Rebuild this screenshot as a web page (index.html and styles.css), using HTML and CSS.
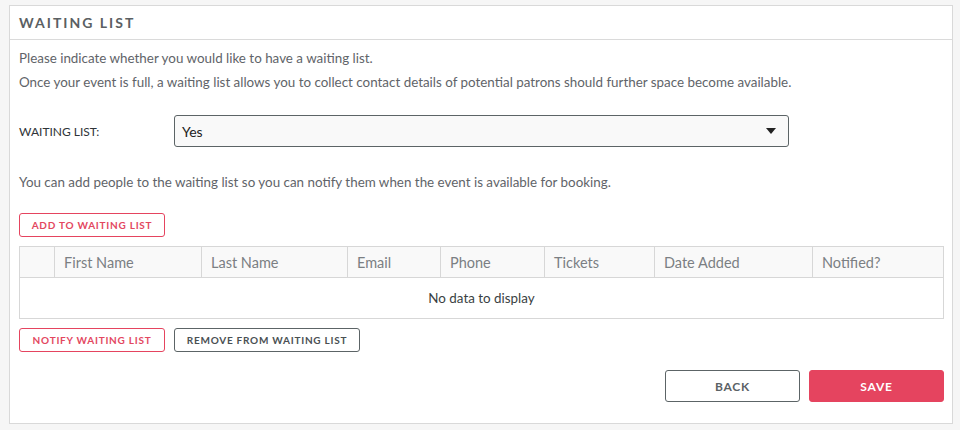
FILE: index.html
```html
<!DOCTYPE html>
<html>
<head>
<meta charset="utf-8">
<link rel="stylesheet" href="styles.css">
</head>
<body>
<div class="panel">
  <div class="panel-head">WAITING LIST</div>
  <div class="panel-body">
    <p class="intro">Please indicate whether you would like to have a waiting list.</p>
    <p class="intro">Once your event is full, a waiting list allows you to collect contact details of potential patrons should further space become available.</p>
    <div class="field">
      <label class="field-label">WAITING LIST:</label>
      <div class="select">
        <span>Yes</span>
        <svg class="caret" width="10" height="6" viewBox="0 0 10 6"><path d="M0 0H10L5 6Z" fill="#222"/></svg>
      </div>
    </div>
    <p class="note">You can add people to the waiting list so you can notify them when the event is available for booking.</p>
    <button class="btn btn-pink">ADD TO WAITING LIST</button>
    <table class="grid">
      <colgroup>
        <col style="width:35px"><col style="width:147px"><col style="width:146px"><col style="width:93px"><col style="width:104px"><col style="width:110px"><col style="width:158px"><col>
      </colgroup>
      <thead>
        <tr><th></th><th>First Name</th><th>Last Name</th><th>Email</th><th>Phone</th><th>Tickets</th><th>Date Added</th><th>Notified?</th></tr>
      </thead>
      <tbody>
        <tr><td colspan="8" class="empty">No data to display</td></tr>
      </tbody>
    </table>
    <div class="actions">
      <button class="btn btn-pink">NOTIFY WAITING LIST</button>
      <button class="btn btn-grey">REMOVE FROM WAITING LIST</button>
    </div>
    <div class="footer">
      <button class="big big-outline">BACK</button>
      <button class="big big-fill">SAVE</button>
    </div>
  </div>
</div>
</body>
</html>
```
FILE: styles.css
```css
* { box-sizing: border-box; }
html, body { margin: 0; padding: 0; }
body {
  background: #f6f6f6;
  font-family: Lato, "Open Sans", sans-serif;
  color: #5f6469;
  padding: 5px 7px 6px 9px;
}
.panel {
  background: #fff;
  border: 1px solid #d9d9d9;
  height: 419px;
}
.panel-head {
  height: 34px;
  border-bottom: 1px solid #dadada;
  padding: 0 9px;
  display: flex;
  align-items: center;
  font-weight: 700;
  font-size: 14px;
  letter-spacing: 2px;
  color: #5b5f63;
}
.panel-body {
  padding: 6px 8px 0 9px;
}
.intro {
  margin: 0;
  font-size: 13.4px;
  line-height: 24px;
}
.field {
  display: flex;
  align-items: center;
  margin-top: 21px;
}
.field-label {
  width: 155px;
  font-size: 12px;
  color: #2f3438;
}
.select {
  width: 615px;
  height: 32px;
  border: 1px solid #5c6466;
  border-radius: 3px;
  background: #f9f9f9;
  display: flex;
  align-items: center;
  justify-content: space-between;
  padding: 0 12px 0 7px;
  font-size: 14px;
  color: #222;
}
.caret { display: block; }
.note {
  margin: 26px 0 0;
  font-size: 13.4px;
  line-height: 18px;
}
.btn {
  font-family: inherit;
  font-size: 10px;
  font-weight: 700;
  letter-spacing: 0.75px;
  white-space: nowrap;
  height: 24px;
  padding: 0;
  background: #fff;
  border-radius: 3px;
  cursor: pointer;
}
.btn-pink { border: 1px solid #e5445f; color: #e3475f; }
.btn-grey { border: 1px solid #5c6466; color: #4a5053; }
.panel-body > .btn-pink { margin-top: 22px; display: block; width: 146px; }
.grid {
  margin-top: 9px;
  width: 925px;
  border-collapse: collapse;
  table-layout: fixed;
  font-size: 14.5px;
}
.grid th {
  background: #f9f9f9;
  border: 1px solid #d7d7d7;
  height: 31px;
  text-align: left;
  font-weight: 400;
  color: #7b7f83;
  padding: 0 9px;
}
.grid td.empty {
  border: 1px solid #d7d7d7;
  height: 41px;
  text-align: center;
  font-size: 13.4px;
  color: #3a3f43;
}
.actions {
  display: flex;
  gap: 9px;
  margin-top: 9px;
}
.actions .btn-pink { width: 146px; }
.actions .btn-grey { width: 186px; }
.footer {
  display: flex;
  justify-content: flex-end;
  gap: 9px;
  margin-top: 18px;
  width: 925px;
}
.big {
  width: 135px;
  height: 32px;
  border-radius: 3px;
  font-family: inherit;
  font-size: 12px;
  font-weight: 700;
  letter-spacing: 0.8px;
  cursor: pointer;
}
.big-outline { background: #fff; border: 1px solid #5c6466; color: #5b6266; }
.big-fill { background: #e5445f; border: 1px solid #e5445f; color: #fff; }
```
